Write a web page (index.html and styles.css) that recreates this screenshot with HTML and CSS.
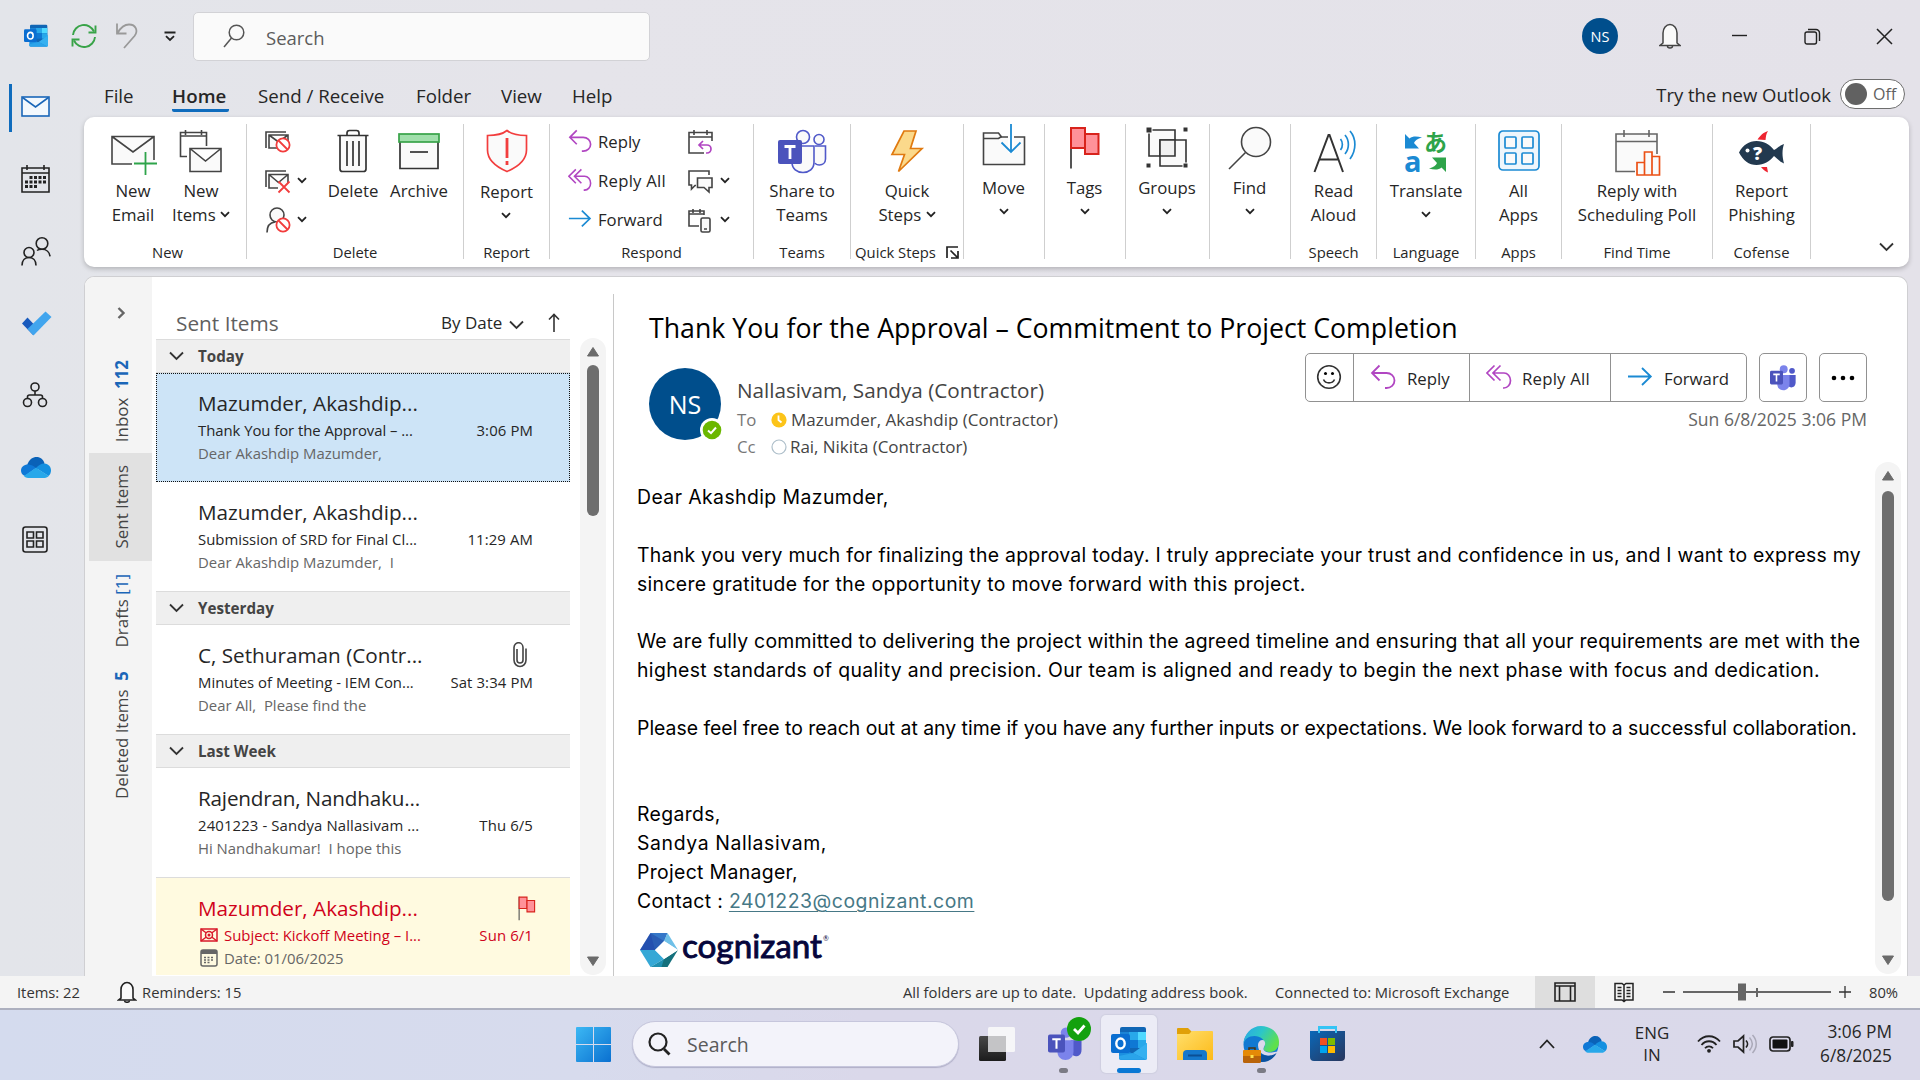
FILE: index.html
```html
<!DOCTYPE html>
<html lang="en">
<head>
<meta charset="utf-8">
<title>Sent Items - Outlook</title>
<link rel="stylesheet" href="styles.css">
</head>
<body>
<svg class="defs" width="0" height="0" aria-hidden="true">
  <symbol id="chev" viewBox="0 0 10 7"><path d="M1 1.200l4 4 4-4" fill="none" stroke="#222" stroke-width="1.800"/></symbol>
  <symbol id="chev-lg" viewBox="0 0 15 10"><path d="M1 1.500l6.500 6.500 6.500-6.500" fill="none" stroke="#333" stroke-width="1.800"/></symbol>
  <symbol id="reply" viewBox="0 0 26 26"><g fill="none" stroke="#b146c2" stroke-width="1.800"><path d="M9.500 1.500L2 9l7.500 7.500M2 9h14.500a8 7.500 0 0 1 0 15H15"/></g></symbol>
  <symbol id="replyall" viewBox="0 0 26 26"><g fill="none" stroke="#b146c2" stroke-width="1.700"><path d="M8.500 1.500L1 9l7.500 7.500M14.500 1.500L7 9l7.500 7.500M7 9h11a6.500 7.500 0 0 1 0 15h-1"/></g></symbol>
  <symbol id="forward" viewBox="0 0 26 26"><path d="M1 12.500h23M15 4l8.800 8.500L15 21" fill="none" stroke="#1b8ad3" stroke-width="1.800"/></symbol>
  <symbol id="flag" viewBox="0 0 32 44"><path d="M2 1.500v41" stroke="#555" stroke-width="2"/><path d="M2 2h14v20H2z" fill="#ff9199" stroke="#d8231c" stroke-width="2"/><path d="M16 8h13.500v20H16z" fill="#ff9199" stroke="#d8231c" stroke-width="2"/></symbol>
  <symbol id="banned" viewBox="0 0 16 16"><circle cx="8" cy="8" r="6.600" fill="#fff" stroke="#f23d3d" stroke-width="1.800"/><path d="M3.500 3.500l9 9" stroke="#f23d3d" stroke-width="1.800"/></symbol>
  <symbol id="cloud" viewBox="0 0 30 21"><path d="M6 8.500C8 2 12 0 15.500 0c4 0 7 2.500 8 6.500L16 12z" fill="#0a62b8"/><path d="M7 7.500c2 0 5 .8 8 3.500L4 19c-3-1-4-3.500-4-5.500 0-3.500 3-6 7-6z" fill="#0f78d6"/><path d="M15 11c3-3 5.500-4.700 8.500-4.500 4 .3 6.500 3.500 6.500 7 0 2-1 4.500-2.500 5.500z" fill="#1490e0"/><path d="M15 10.800l12.700 8.100c-.8.900-2.200 2-4.200 2H7c-1.500 0-3-.6-4.200-1.900z" fill="#28a8ea"/></symbol>
  <symbol id="outlook" viewBox="0 0 36 36"><rect x="9" y="1" width="26" height="27" rx="2" fill="#1066b5"/><rect x="9" y="6" width="9" height="8" fill="#1b83d5"/><rect x="18" y="6" width="9" height="8" fill="#28a8ea"/><rect x="27" y="6" width="8" height="8" fill="#50d9ff"/><rect x="18" y="14" width="9" height="8" fill="#0f78d4"/><rect x="27" y="14" width="8" height="8" fill="#28a8ea"/><path d="M36 17v15a2 2 0 0 1-2 2H10a2 2 0 0 1-2-2V20l14 8z" fill="#1b8fe0"/><path d="M22 27l14-10v15a2 2 0 0 1-1 1.700z" fill="#35b0f0"/><path d="M8 30l14-3 13 6.800H10a2 2 0 0 1-2-2z" fill="#2aa4ea"/><rect x="0" y="8" width="19" height="19" rx="2" fill="#0a6ed1"/><ellipse cx="9.500" cy="17.500" rx="4.200" ry="5" fill="none" stroke="#fff" stroke-width="2.400"/></symbol>
  <symbol id="teams" viewBox="0 0 36 36"><circle cx="19" cy="6" r="5.500" fill="#7b83eb"/><circle cx="30.500" cy="8" r="4" fill="#5059c9"/><path d="M24 14h11.500v10c0 5-3 7-6 7s-5.500-2-5.500-6z" fill="#5059c9"/><path d="M10 14h17v12c0 6-4 9-8.500 9S10 32 10 26z" fill="#7b83eb"/><rect x="0" y="8" width="18" height="19" rx="2" fill="#4b53bc"/><path d="M4.500 13h9M9 13v10" stroke="#fff" stroke-width="2.200"/></symbol>
</svg>

<div class="window">
  <header class="titlebar">
    <svg class="app-logo" width="24" height="24"><use href="#outlook"/></svg>
    <svg class="tb-refresh" width="26" height="26" viewBox="0 0 26 26"><g fill="none" stroke="#38a348" stroke-width="1.900"><path d="M2 12a11 11 0 0 1 21-3.500M24 14a11 11 0 0 1-21 3.500"/><path d="M24.500 2.500v7h-7M1.500 23.500v-7h7"/></g></svg>
    <svg class="tb-undo" width="24" height="26" viewBox="0 0 24 26"><path d="M2 .5v10h9.500M2.500 10C6 4 10 1.500 14 1.500c7 0 9.500 6.500 5.500 11.500L9 25" fill="none" stroke="#999" stroke-width="1.800"/></svg>
    <svg class="tb-more" width="12" height="11" viewBox="0 0 12 11"><path d="M.5 1.500h11" stroke="#222" stroke-width="2"/><path d="M2 5.200l4 3.800 4-3.800" fill="none" stroke="#222" stroke-width="1.800"/></svg>
    <div class="search">
      <svg width="22" height="24" viewBox="0 0 22 24"><circle cx="13.500" cy="8.500" r="7.300" fill="none" stroke="#555" stroke-width="1.500"/><path d="M8.500 14L1 23" stroke="#555" stroke-width="1.500"/></svg>
      <span>Search</span>
    </div>
    <div class="win-controls">
      <div class="me">NS</div>
      <svg class="bell" width="22" height="26" viewBox="0 0 22 26"><path d="M4 20V10a7 8.500 0 0 1 14 0v10l3 2.500H1z" fill="#fafafa" stroke="#444" stroke-width="1.500"/><path d="M8.500 23a2.500 2 0 0 0 5 0" fill="none" stroke="#444" stroke-width="1.500"/></svg>
      <svg class="min" width="16" height="16" viewBox="0 0 16 16"><path d="M0 7.500h15" stroke="#222" stroke-width="1.400"/></svg>
      <svg class="max" width="17" height="17" viewBox="0 0 17 17"><g fill="none" stroke="#222" stroke-width="1.400"><rect x="1" y="4" width="11.500" height="12" rx="2"/><path d="M4 1.500h8a3.500 3.500 0 0 1 3.500 3.500v8"/></g></svg>
      <svg class="close" width="17" height="17" viewBox="0 0 17 17"><path d="M1 1l15 15M16 1L1 16" stroke="#222" stroke-width="1.500"/></svg>
    </div>
  </header>

  <nav class="rail">
    <div class="rail-item active"><svg width="30" height="22" viewBox="0 0 30 22"><rect x="1" y="1" width="27" height="19" fill="#f3f8fd" stroke="#1a66b8" stroke-width="1.600"/><path d="M1.500 1.500l13 9.500 13-9.500" fill="none" stroke="#1a66b8" stroke-width="1.600"/></svg></div>
    <div class="rail-item"><svg width="30" height="28" viewBox="0 0 30 28"><path d="M1 3h27v24H1zM1 8h27M6 0v5M23 0v5" fill="none" stroke="#222" stroke-width="1.600"/><g fill="#222"><path d="M8.500 11h3v3h-3zM13 11h3v3h-3zM17.500 11h3v3h-3zM22 11h3v3h-3zM4 15.500h3v3H4zM8.500 15.500h3v3h-3zM13 15.500h3v3h-3zM17.500 15.500h3v3h-3zM22 15.500h3v3h-3zM4 20h3v3H4zM8.500 20h3v3h-3zM13 20h3v3h-3z"/></g></svg></div>
    <div class="rail-item"><svg width="30" height="30" viewBox="0 0 30 30"><g fill="none" stroke="#222" stroke-width="1.600"><circle cx="21" cy="7.500" r="5.800"/><path d="M16 14.500c1-.8 3-1.200 5-1.200 4.500 0 7.500 3 8 7"/><circle cx="8" cy="16.500" r="5"/><path d="M1 29.500c0-5 3-8 7-8s7 3 7 8"/></g></svg></div>
    <div class="rail-item"><svg width="31" height="25" viewBox="0 0 31 25"><path d="M1 12.500l5.500-6 7 7.500-1.500 10z" fill="#185abd"/><path d="M6.500 18L24.500.5 30.500 6 12.500 24.500z" fill="#41a5ee"/></svg></div>
    <div class="rail-item"><svg width="26" height="26" viewBox="0 0 26 26"><g fill="none" stroke="#222" stroke-width="1.600"><circle cx="13" cy="5" r="4"/><circle cx="5.500" cy="20.500" r="4"/><circle cx="20.500" cy="20.500" r="4"/><path d="M13 9v4M5.500 16.500V15a2 2 0 0 1 2-2h11a2 2 0 0 1 2 2v1.500"/></g></svg></div>
    <div class="rail-item"><svg width="30" height="21"><use href="#cloud"/></svg></div>
    <div class="rail-item"><svg width="26" height="27" viewBox="0 0 26 27"><g fill="none" stroke="#222" stroke-width="1.600"><rect x="1" y="1" width="24" height="25" rx="2.500"/><path d="M5 6h6.500v6H5zM14.500 6H21v6h-6.500zM5 15h6.500v6H5zM14.500 15H21v6h-6.500z"/></g></svg></div>
  </nav>

  <main class="main">
    <div class="tabs">
      <span class="t-file">File</span><span class="t-home">Home</span><span class="t-send">Send / Receive</span><span class="t-folder">Folder</span><span class="t-view">View</span><span class="t-help">Help</span>
      <div class="try"><span>Try the new Outlook</span><div class="toggle"><i></i>Off</div></div>
    </div>

    <div class="ribbon">
      <section class="group g-new"><div class="tools">
        <div class="big w68"><svg width="48" height="55" viewBox="0 0 48 55"><path d="M3 12.500h42v27.500H3z" fill="#fafafa"/><path d="M45 36V12.500H3V40h20M3 12.500L24 28l21-15.500" fill="none" stroke="#444" stroke-width="1.600"/><path d="M36.500 28v23M25 39.500h23" stroke="#2ea44a" stroke-width="1.800"/></svg><span>New<br>Email</span></div>
        <div class="big w68"><svg width="48" height="55" viewBox="0 0 48 55"><path d="M10 32.500H3.500V8.500h26V22M3.500 12h26M8.500 6v5M24.500 6v5" fill="none" stroke="#444" stroke-width="1.600"/><path d="M13 24.500h31v23H13zM13 24.500L28.500 37 44 24.500" fill="#fafafa" stroke="#444" stroke-width="1.600"/></svg><span>New<br>Items <svg class="c" width="10" height="7"><use href="#chev"/></svg></span></div>
      </div><h6>New</h6></section>

      <section class="group g-delete"><div class="tools">
        <div class="minis">
          <div><svg width="26" height="26" viewBox="0 0 26 26"><path d="M1 19V3h20M1 6v9" fill="none" stroke="#444" stroke-width="1.600"/><path d="M4 6h19v13H4zM4 6l9.500 7L23 6" fill="#fafafa" stroke="#444" stroke-width="1.600"/><use href="#banned" x="10" y="8" width="16" height="16"/></svg></div>
          <div><svg width="26" height="26" viewBox="0 0 26 26"><path d="M1 19V3h20" fill="none" stroke="#444" stroke-width="1.600"/><path d="M13 20H4V6.500h19V15M4 6.500l9.500 8L23 6.500" fill="#fafafa" stroke="#444" stroke-width="1.600"/><path d="M13.500 13.500l11 11M24.500 13.500l-11 11" stroke="#f23d3d" stroke-width="1.800"/></svg><svg class="c" width="10" height="7"><use href="#chev"/></svg></div>
          <div><svg width="26" height="26" viewBox="0 0 26 26"><circle cx="12" cy="8" r="7" fill="#fafafa" stroke="#444" stroke-width="1.600"/><path d="M2 25.500c0-6 3-10 8-10.500" fill="none" stroke="#444" stroke-width="1.600"/><use href="#banned" x="10" y="10" width="16" height="16"/></svg><svg class="c" width="10" height="7"><use href="#chev"/></svg></div>
        </div>
        <div class="big w68"><svg width="48" height="55" viewBox="0 0 48 55"><path d="M11 12v33a2.500 2.500 0 0 0 2.500 2.500h21A2.500 2.500 0 0 0 37 45V12" fill="#fafafa" stroke="#333" stroke-width="1.700"/><path d="M8.500 11.500h31M18 11V9a2.500 2.500 0 0 1 2.500-2.500h7A2.500 2.500 0 0 1 30 9v2M18 17v25M24 17v25M30 17v25" fill="none" stroke="#333" stroke-width="1.700"/></svg><span>Delete</span></div>
        <div class="big w64"><svg width="48" height="55" viewBox="0 0 48 55"><path d="M5 17v27.500h38V17" fill="#fafafa" stroke="#333" stroke-width="1.700"/><rect x="4" y="10" width="40" height="8" fill="#a0dfab" stroke="#38a348" stroke-width="1.700"/><path d="M15 28h18" stroke="#333" stroke-width="1.700"/></svg><span>Archive</span></div>
      </div><h6>Delete</h6></section>

      <section class="group g-report"><div class="tools">
        <div class="big w86 report"><svg width="48" height="56" viewBox="0 0 48 56"><path d="M24 6.500c3 2.500 10 5 19.500 5V26c0 11-9 17-19.500 21.500C13.500 43 4.500 37 4.500 26V11.500c9.500 0 16.500-2.500 19.500-5z" fill="#fafafa" stroke="#f23d3d" stroke-width="1.700"/><path d="M24 14v20M24 37v4" stroke="#f23d3d" stroke-width="2.800"/></svg><span>Report<br><svg class="c" width="10" height="7"><use href="#chev"/></svg></span></div>
      </div><h6>Report</h6></section>

      <section class="group g-respond"><div class="tools">
        <div class="replies">
          <div><svg width="24" height="24"><use href="#reply"/></svg>Reply</div>
          <div class="all"><svg width="24" height="24"><use href="#replyall"/></svg>Reply All</div>
          <div><svg width="24" height="24"><use href="#forward"/></svg>Forward</div>
        </div>
        <div class="minis">
          <div><svg width="26" height="26" viewBox="0 0 26 26"><path d="M16 24H1V3.500h23V12M1 8h23M6 1v5M19 1v5" fill="none" stroke="#444" stroke-width="1.600"/><path d="M15 12l-4 4 4 4M11 16h8a4 4 0 0 1 0 8h-1" fill="none" stroke="#b146c2" stroke-width="1.700"/></svg></div>
          <div><svg width="26" height="26" viewBox="0 0 26 26"><path d="M8 17.500H7L3.500 21v-4H1V3h20v4" fill="none" stroke="#444" stroke-width="1.600"/><path d="M9.500 10H24v9.500h-3V24l-5-4.500H9.500z" fill="#fafafa" stroke="#444" stroke-width="1.600"/></svg><svg class="c" width="10" height="7"><use href="#chev"/></svg></div>
          <div><svg width="26" height="26" viewBox="0 0 26 26"><path d="M11 19H1V4h15v4M1 7h15M5 2v4M12 2v4" fill="none" stroke="#444" stroke-width="1.600"/><rect x="13" y="11" width="9" height="14" rx="1.500" fill="#fafafa" stroke="#444" stroke-width="1.600"/><path d="M16 22h3" stroke="#444" stroke-width="1.500"/></svg><svg class="c" width="10" height="7"><use href="#chev"/></svg></div>
        </div>
      </div><h6>Respond</h6></section>

      <section class="group g-teams"><div class="tools">
        <div class="big w96"><svg width="50" height="55" viewBox="0 0 50 55"><g fill="#fafafa" stroke="#5059c9" stroke-width="1.600"><circle cx="26" cy="13" r="6.500"/><circle cx="42" cy="15.500" r="5"/><path d="M38 22h10.500v13c0 4-3 6-6 6-2 0-4-1-4.500-2"/><path d="M15 22h22v16c0 7-5 10.500-11 10.500S15 45 15 38z"/></g><rect x="1" y="16" width="24" height="24" rx="2" fill="#4b53bc"/><path d="M7.500 22.500h11M13 22.500V35" stroke="#fff" stroke-width="2.800"/></svg><span>Share to<br>Teams</span></div>
      </div><h6>Teams</h6></section>

      <section class="group g-quick"><div class="tools">
        <div class="big w112"><svg width="48" height="55" viewBox="0 0 48 55"><path d="M21 7h12L27.500 24.500H39L15.500 47.500l6-17H9z" fill="#fbd98b" stroke="#e07a10" stroke-width="1.700"/></svg><span>Quick<br>Steps <svg class="c" width="10" height="7"><use href="#chev"/></svg></span></div>
      </div><h6>Quick Steps <svg class="launch" width="13" height="13" viewBox="0 0 13 13"><path d="M1 12V1h11M4.500 4.500l7 7M12 5v7H5" fill="none" stroke="#222" stroke-width="1.700"/></svg></h6></section>

      <section class="group g-81"><div class="tools"><div class="big w80 short"><svg width="48" height="52" viewBox="0 0 48 52"><path d="M3.500 40.500V9h15l3 4h23v27.500z" fill="#fafafa" stroke="#444" stroke-width="1.600"/><path d="M3.500 14.500h15l3-2" fill="none" stroke="#444" stroke-width="1.600"/><path d="M31 0v29" stroke="#fff" stroke-width="6"/><path d="M31 0v28M21.500 18.500L31 28l9.500-9.500" fill="none" stroke="#1b8ad3" stroke-width="1.800"/></svg><span>Move<br><svg class="c" width="10" height="7"><use href="#chev"/></svg></span></div></div></section>
      <section class="group g-81"><div class="tools"><div class="big w80 short"><svg width="48" height="52" viewBox="0 0 48 52"><use href="#flag" x="8" y="2" width="32" height="44"/></svg><span>Tags<br><svg class="c" width="10" height="7"><use href="#chev"/></svg></span></div></div></section>
      <section class="group g-84"><div class="tools"><div class="big w82 short"><svg width="48" height="52" viewBox="0 0 48 52"><path d="M6 6h26v26H6z" fill="#fafafa" stroke="#333" stroke-width="1.600"/><path d="M17 16h26v26H17z" fill="#fafafa" stroke="#333" stroke-width="1.600"/><path d="M17 16h15v16H17z" fill="#f0f0f0" stroke="#333" stroke-width="1.600"/><path d="M3 3h6v6H3zM40 3h5v5h-5zM3 39h5v5H3zM40 39h5v5h-5z" fill="#333" stroke="#fff" stroke-width="1"/></svg><span>Groups<br><svg class="c" width="10" height="7"><use href="#chev"/></svg></span></div></div></section>
      <section class="group g-81"><div class="tools"><div class="big w80 short"><svg width="48" height="52" viewBox="0 0 48 52"><circle cx="30" cy="18" r="14.500" fill="#fafafa" stroke="#444" stroke-width="1.600"/><path d="M19.500 28.500L3 45" stroke="#444" stroke-width="1.600"/></svg><span>Find<br><svg class="c" width="10" height="7"><use href="#chev"/></svg></span></div></div></section>

      <section class="group g-speech"><div class="tools"><div class="big w84"><svg width="48" height="55" viewBox="0 0 48 55"><path d="M4.500 48L18.500 11h1L33 48M9 35.500h20" fill="none" stroke="#333" stroke-width="2"/><path d="M30.500 15c2.500 3 2.500 8 0 11M35 11c4.500 5.500 4.500 13.500 0 19M40 7c6.500 7.500 6.500 19 0 28" fill="none" stroke="#1b8ad3" stroke-width="1.700"/></svg><span>Read<br>Aloud</span></div></div><h6>Speech</h6></section>
      <section class="group g-lang"><div class="tools"><div class="big w98"><svg width="48" height="55" viewBox="0 0 48 55"><path d="M3 10l4.500 4.500c3-2.500 7-2.500 12.500-1-4.500 1-7 3-8 5.500l5 5.500H3z" fill="#1b8ad3"/><path d="M44 48l-4.500-4.500c-3 2.500-7 2.500-12.500 1 4.500-1 7-3 8-5.500l-5-5.500h14z" fill="#2ea44a"/><text x="2" y="48" class="tr-a">a</text><text x="22" y="27" class="tr-jp">あ</text></svg><span>Translate<br><svg class="c" width="10" height="7"><use href="#chev"/></svg></span></div></div><h6>Language</h6></section>
      <section class="group g-apps"><div class="tools"><div class="big w86"><svg width="48" height="55" viewBox="0 0 48 55"><g fill="#fafafa" stroke="#1b8ad3" stroke-width="1.700"><rect x="4" y="7" width="40" height="39" rx="4" fill="#eef6fc"/><rect x="10" y="13" width="11" height="11" rx="1"/><rect x="27" y="13" width="11" height="11" rx="1"/><rect x="10" y="29" width="11" height="11" rx="1"/><rect x="27" y="29" width="11" height="11" rx="1"/></g></svg><span>All<br>Apps</span></div></div><h6>Apps</h6></section>
      <section class="group g-find"><div class="tools"><div class="big w150"><svg width="48" height="55" viewBox="0 0 48 55"><path d="M22 47.500H3V10h41v20" fill="#fafafa" stroke="#666" stroke-width="1.600"/><path d="M3 17.500h41M11 6v7M36 6v7" stroke="#666" stroke-width="1.600"/><path d="M24 38.500h7.500V51H24zM31.500 28H39v23h-7.500zM39 32.500h7.500V51H39z" fill="#fafafa" stroke="#eb5015" stroke-width="1.700"/></svg><span>Reply with<br>Scheduling Poll</span></div></div><h6>Find Time</h6></section>
      <section class="group g-cof"><div class="tools"><div class="big w97"><svg width="48" height="55" viewBox="0 0 48 55"><path d="M19.500 15.500c3-4 5.500-7 10.500-8.500-2 3-2 5.500-2.500 9zM23 43h6l1 5.500c-3-1-5-3-7-5.500z" fill="#ee2430"/><path d="M1 28.500C5 21 11 17 18.500 17c8 0 13 3.500 17.500 9 3-1.500 5.500-4.500 10-6-2 6-2 12 0 19.500-5-2-7-5.500-10-7.500-4.500 5.500-10 9-17.500 9C11 41 5 36.500 1 28.500z" fill="#22394f"/><circle cx="9.500" cy="26.500" r="2" fill="#fff"/><text x="15" y="35.500" class="qm">?</text></svg><span>Report<br>Phishing</span></div></div><h6>Cofense</h6></section>
      <svg class="collapse" width="15" height="10"><use href="#chev-lg"/></svg>
    </div>

    <div class="panel">
      <aside class="strip">
        <div class="exp"><svg width="9" height="12" viewBox="0 0 9 12"><path d="M1.500 1l5 5-5 5" fill="none" stroke="#666" stroke-width="2.400"/></svg></div>
        <div class="fold inbox"><span>Inbox&nbsp; <b>112</b></span></div>
        <div class="fold sent"><span>Sent Items</span></div>
        <div class="fold drafts"><span>Drafts <em>[1]</em></span></div>
        <div class="fold deleted"><span>Deleted Items&nbsp; <b>5</b></span></div>
      </aside>

      <div class="list">
        <div class="list-head"><span class="title">Sent Items</span><span class="sort">By Date</span><svg class="sortchev" width="15" height="10"><use href="#chev-lg"/></svg><svg width="12" height="20" viewBox="0 0 12 20"><path d="M6 19V2M1 6.500l5-5 5 5" fill="none" stroke="#333" stroke-width="1.600"/></svg></div>
        <div class="day today"><svg width="15" height="10"><use href="#chev-lg"/></svg>Today</div>
        <div class="msg sel"><div class="from">Mazumder, Akashdip...</div><div class="subj"><span class="w215">Thank You for the Approval – ...</span><time>3:06 PM</time></div><div class="prev">Dear Akashdip Mazumder,</div></div>
        <div class="msg"><div class="from">Mazumder, Akashdip...</div><div class="subj"><span>Submission of SRD for Final Cl...</span><time>11:29 AM</time></div><div class="prev">Dear Akashdip Mazumder,&nbsp; I</div></div>
        <div class="day"><svg width="15" height="10"><use href="#chev-lg"/></svg>Yesterday</div>
        <div class="msg"><div class="from">C, Sethuraman (Contr...<svg class="clip" width="16" height="26" viewBox="0 0 16 26"><path d="M5 7v11a3 3 0 0 0 6 0V6M11 6a4.500 5 0 0 0-9-.5V18a6 6.500 0 0 0 12 0V6.500" fill="none" stroke="#444" stroke-width="1.600"/></svg></div><div class="subj"><span>Minutes of Meeting - IEM Con...</span><time>Sat 3:34 PM</time></div><div class="prev">Dear All,&nbsp; Please find the</div></div>
        <div class="day"><svg width="15" height="10"><use href="#chev-lg"/></svg>Last Week</div>
        <div class="msg"><div class="from raj">Rajendran, Nandhaku...</div><div class="subj"><span class="wide">2401223 - Sandya Nallasivam ...</span><time>Thu 6/5</time></div><div class="prev">Hi Nandhakumar!&nbsp; I hope this</div></div>
        <div class="msg flagged"><div class="from">Mazumder, Akashdip...<svg class="flag" width="18" height="25" viewBox="0 0 32 44" preserveAspectRatio="none"><use href="#flag"/></svg></div><div class="subj"><svg width="18" height="14" viewBox="0 0 18 14"><g fill="none" stroke="#d9192a" stroke-width="1.500"><rect x="1" y="1" width="16" height="12"/><path d="M1 1l16 12M17 1L1 13"/><circle cx="9" cy="7" r="3.500" fill="#fffadf"/></g><circle cx="9" cy="7" r="1.500" fill="#d9192a"/></svg><span>Subject: Kickoff Meeting – I...</span><time>Sun 6/1</time></div><div class="prev"><svg width="18" height="18" viewBox="0 0 18 18"><rect x="1" y="1" width="16" height="16" rx="2" fill="none" stroke="#666" stroke-width="1.500"/><path d="M1 1h16v4H1z" fill="#666"/><path d="M4 8.500h10M4 11h10M4 13.500h7" stroke="#666" stroke-width="1.500" stroke-dasharray="2 1.500"/></svg>Date: 01/06/2025</div></div>
      </div>
      <div class="scroll left"><svg width="14" height="11" viewBox="0 0 14 11"><path d="M7 1.500L12.500 10h-11z" fill="#6b6b6b" stroke="#6b6b6b" stroke-linejoin="round"/></svg><i></i><svg class="down" width="14" height="11" viewBox="0 0 14 11"><path d="M7 9.500L1.500 1h11z" fill="#6b6b6b" stroke="#6b6b6b" stroke-linejoin="round"/></svg></div>

      <article class="reader">
        <div class="subject">Thank You for the Approval – Commitment to Project Completion</div>
        <div class="meta">
          <div class="avatar">NS<svg width="24" height="24" viewBox="0 0 24 24"><circle cx="12" cy="12" r="12" fill="#fff"/><circle cx="12" cy="12" r="9.300" fill="#6bb700"/><path d="M8 12.500l3 2.700 5-5.700" fill="none" stroke="#fff" stroke-width="2"/></svg></div>
          <div class="people">
            <div class="name">Nallasivam, Sandya (Contractor)</div>
            <div class="to"><label>To</label><svg width="16" height="16" viewBox="0 0 16 16"><circle cx="8" cy="8" r="7.600" fill="#fcc419"/><path d="M7.500 3.500V8l3 2.500" fill="none" stroke="#fff" stroke-width="1.800"/></svg><span>Mazumder, Akashdip (Contractor)</span></div>
            <div class="to cc"><label>Cc</label><svg width="16" height="16" viewBox="0 0 16 16"><circle cx="8" cy="8" r="7" fill="#fff" stroke="#aebfca" stroke-width="1.200"/></svg><span>Rai, Nikita (Contractor)</span></div>
          </div>
          <div class="actions">
            <div class="btns">
              <div class="bar">
                <div class="b-emo"><svg width="26" height="26" viewBox="0 0 26 26"><g fill="none" stroke="#333" stroke-width="1.600"><circle cx="13" cy="13" r="11.300"/><path d="M7.500 15.500c2 4.500 9 4.500 11 0"/></g><circle cx="9.500" cy="9.500" r="1.500"/><circle cx="16.500" cy="9.500" r="1.500"/></svg></div>
                <div class="b-reply"><svg width="26" height="26"><use href="#reply"/></svg><span>Reply</span></div>
                <div class="b-all"><svg width="26" height="26"><use href="#replyall"/></svg><span>Reply All</span></div>
                <div class="b-fwd"><svg width="26" height="26"><use href="#forward"/></svg><span>Forward</span></div>
              </div>
              <div class="sq"><svg width="26" height="26"><use href="#teams"/></svg></div>
              <div class="sq"><svg width="24" height="6" viewBox="0 0 24 6"><circle cx="3" cy="3" r="2.300"/><circle cx="12" cy="3" r="2.300"/><circle cx="21" cy="3" r="2.300"/></svg></div>
            </div>
            <time>Sun 6/8/2025 3:06 PM</time>
          </div>
        </div>
        <div class="body-row">
          <div class="mail">
            <p class="s42">Dear Akashdip Mazumder,</p>
            <p>&nbsp;</p>
            <p class="s27">Thank you very much for finalizing the approval today. I truly appreciate your trust and confidence in us, and I want to express my</p>
            <p class="s34">sincere gratitude for the opportunity to move forward with this project.</p>
            <p>&nbsp;</p>
            <p class="s23">We are fully committed to delivering the project within the agreed timeline and ensuring that all your requirements are met with the</p>
            <p class="s37">highest standards of quality and precision. Our team is aligned and ready to begin the next phase with focus and dedication.</p>
            <p>&nbsp;</p>
            <p>Please feel free to reach out at any time if you have any further inputs or expectations. We look forward to a successful collaboration.</p>
            <p>&nbsp;</p>
            <p>&nbsp;</p>
            <p class="s34">Regards,</p>
            <p class="s62">Sandya Nallasivam,</p>
            <p class="s34">Project Manager,</p>
            <p class="s34">Contact : <a>2401223@cognizant.com</a></p>
            <svg class="logo" width="192" height="40" viewBox="0 0 192 40">
              <path d="M1 20L11.500 3 18 11 16 20z" fill="#2a5fc0"/><path d="M11.500 3h17L25 12l-9 8z" fill="#3577c8"/><path d="M28.500 3L39 20 25 11z" fill="#6fc0e8"/><path d="M1 20h15l9 9-13.500 8z" fill="#35a8d6"/><path d="M11.500 37l13.500-8 3.500 8z" fill="#1f8fb0"/><path d="M39 20L28.500 37h-6L25 29z" fill="#14707c"/><path d="M1 20L11.500 3 25 11l-9 9z" fill="#1c3f9c" opacity=".45"/><path d="M16 20l9-9 14 9-14 9z" fill="#fff"/>
              <text x="43" y="28" textLength="140" lengthAdjust="spacingAndGlyphs" class="brand">cognizant</text><text x="184" y="11" class="reg">®</text>
            </svg>
          </div>
          <div class="scroll right"><svg width="14" height="11" viewBox="0 0 14 11"><path d="M7 1.500L12.500 10h-11z" fill="#6b6b6b" stroke="#6b6b6b" stroke-linejoin="round"/></svg><i></i><svg class="down" width="14" height="11" viewBox="0 0 14 11"><path d="M7 9.500L1.500 1h11z" fill="#6b6b6b" stroke="#6b6b6b" stroke-linejoin="round"/></svg></div>
        </div>
      </article>
    </div>
  </main>
</div>

<footer class="status">
  <span class="st-items">Items: 22</span>
  <svg class="st-bell" width="20" height="22" viewBox="0 0 20 22"><path d="M4 17V8.500a6 7 0 0 1 12 0V17l2.500 2h-17z" fill="#fafafa" stroke="#222" stroke-width="1.600"/><path d="M7.500 19.500a2.500 1.800 0 0 0 5 0" fill="none" stroke="#222" stroke-width="1.500"/></svg>
  <span class="st-rem">Reminders: 15</span>
  <span class="st-all">All folders are up to date.&nbsp; Updating address book.</span>
  <span class="st-conn">Connected to: Microsoft Exchange</span>
  <div class="st-view"><svg width="22" height="20" viewBox="0 0 22 20"><path d="M1 1h20v18H1zM1 4h20M5.500 4v15M16.500 4v15" fill="none" stroke="#222" stroke-width="1.600"/></svg></div>
  <svg class="st-book" width="20" height="21" viewBox="0 0 20 21"><path d="M1 1.500h7l2 1.500 2-1.500h7V18h-7l-2 1.500L8 18H1zM10 3v17" fill="none" stroke="#222" stroke-width="1.500"/><path d="M3.500 5.500h4M3.500 8.500h4M3.500 11.500h4M3.500 14.500h4M12.500 5.500h4M12.500 8.500h4M12.500 11.500h4M12.500 14.500h4" stroke="#222" stroke-width="1.300"/></svg>
  <svg class="st-zoom" width="190" height="20" viewBox="0 0 190 20"><path d="M0 10h12M176 10h12M182 4v12" stroke="#333" stroke-width="1.300"/><path d="M20 10h148M94 6v9" stroke="#666" stroke-width="2"/><path d="M75 1.500h8v17h-8z" fill="#666"/></svg>
  <span class="st-pct">80%</span>
</footer>

<div class="taskbar">
  <svg class="start" width="35" height="35" viewBox="0 0 35 35"><defs><linearGradient id="wg" x1="0" y1="0" x2="1" y2="1"><stop offset="0" stop-color="#3cb8f4"/><stop offset="1" stop-color="#0a70d0"/></linearGradient></defs><path d="M1 0h16v17H0V1a1 1 0 0 1 1-1zM18 0h16a1 1 0 0 1 1 1v16H18zM0 18h17v17H1a1 1 0 0 1-1-1zM18 18h17v16a1 1 0 0 1-1 1H18z" fill="url(#wg)"/></svg>
  <div class="tsearch"><svg width="23" height="24" viewBox="0 0 23 24"><circle cx="10" cy="10" r="8.500" fill="none" stroke="#222" stroke-width="2.200"/><path d="M16 17l5.500 5.500" stroke="#222" stroke-width="2.800"/></svg><span>Search</span></div>
  <svg class="tview" width="36" height="35" viewBox="0 0 36 35"><defs><linearGradient id="dk" x1="0" y1="0" x2="0" y2="1"><stop offset="0" stop-color="#484848"/><stop offset="1" stop-color="#1c1c1c"/></linearGradient></defs><rect x="0" y="9" width="27" height="25" rx="1.500" fill="url(#dk)"/><rect x="9" y="0" width="27" height="25" rx="1.500" fill="#f6f6f8"/><rect x="9" y="9" width="18" height="16" fill="#c4c4c6"/></svg>
  <div class="tapp teams"><svg width="48" height="48" viewBox="0 0 48 48"><use href="#teams" x="1" y="10" width="34" height="34"/><circle cx="32" cy="12" r="12" fill="#13a10e"/><path d="M27 12l4 4 6.500-7.500" fill="none" stroke="#fff" stroke-width="2.800"/></svg><i></i></div>
  <div class="tapp on"><svg width="36" height="36"><use href="#outlook"/></svg><i></i></div>
  <div class="tapp folder"><svg width="36" height="34" viewBox="0 0 36 34"><defs><linearGradient id="fg" x1="0" y1="0" x2="1" y2="1"><stop offset="0" stop-color="#ffdf6c"/><stop offset="1" stop-color="#fdba18"/></linearGradient></defs><path d="M0 8V2a1 1 0 0 1 1-1h10l4 4v3z" fill="#e0a008"/><path d="M0 7h12l3-3h20a1 1 0 0 1 1 1v28H0z" fill="url(#fg)"/><path d="M6 33v-6a4 4 0 0 1 4-4h16a4 4 0 0 1 4 4v6z" fill="#1478cc"/><path d="M11 28.500h14" stroke="#0b4f94" stroke-width="2"/></svg></div>
  <div class="tapp edge"><svg width="36" height="37" viewBox="0 0 36 37"><defs><linearGradient id="eg" x1="0" y1="0" x2="1" y2=".5"><stop offset="0" stop-color="#2aa5ea"/><stop offset=".5" stop-color="#2cc6c8"/><stop offset="1" stop-color="#5fe04c"/></linearGradient></defs><circle cx="18" cy="18.500" r="17.500" fill="#1179d2"/><path d="M.5 18C1 8 8.500 0 18 0c11 0 18 8 18 16 0 6-4 10-9 10-4 0-6.500-1.500-6.500-3 0-1 1.500-2 1.500-5 0-4-4.500-8-10.500-8S1.500 13 .5 18z" fill="url(#eg)"/><path d="M15 19c0-3 2-5 4.500-5 2 0 3 2 2.500 4.500-.3 1.500-1.500 3-1.500 4.500 0 2 4 4 8 3.500l6-1-2 4c-6 2-17.500 0-17.500-10.500z" fill="#dbd9eb"/><path d="M33.500 27c-2 4.500-7 9-15 9-3-2-5-6-4-11 4 5 12 6.500 19 2z" fill="#0c529f"/><rect x="0" y="24" width="18" height="13" rx="1.500" fill="#b9640a"/><path d="M0 25.500a1.500 1.500 0 0 1 1.500-1.500h15a1.500 1.500 0 0 1 1.500 1.500V30H0z" fill="#e58a07"/><path d="M6 24v-2h6v2" fill="none" stroke="#4a3312" stroke-width="1.500"/><rect x="7.500" y="29" width="3" height="3" fill="#ffe14a"/></svg><i></i></div>
  <div class="tapp store"><svg width="35" height="36" viewBox="0 0 35 36"><defs><linearGradient id="sg" x1="0" y1="0" x2="1" y2="1"><stop offset="0" stop-color="#0b68b8"/><stop offset="1" stop-color="#28355c"/></linearGradient></defs><path d="M9 8V1h17v7" fill="none" stroke="#35c4f5" stroke-width="2"/><path d="M0 5h35v26a4 4 0 0 1-4 4H4a4 4 0 0 1-4-4z" fill="url(#sg)"/><path d="M9 7V2h17v5" fill="none" stroke="#35c4f5" stroke-width="2"/><path d="M10 12h7v7h-7z" fill="#f25022"/><path d="M18 12h7v7h-7z" fill="#7fba00"/><path d="M10 20h7v7h-7z" fill="#00a4ef"/><path d="M18 20h7v7h-7z" fill="#ffb900"/></svg></div>
  <div class="tray">
    <svg class="up" width="16" height="10" viewBox="0 0 16 10"><path d="M1 9l7-7.500L15 9" fill="none" stroke="#222" stroke-width="1.800"/></svg>
    <svg class="od" width="24" height="17"><use href="#cloud"/></svg>
    <div class="lang">ENG<br>IN</div>
    <svg class="wifi" width="24" height="18" viewBox="0 0 24 18"><g fill="none" stroke="#222" stroke-width="1.800"><path d="M1 6.500c6-7 16-7 22 0M4.500 10c4-5 11-5 15 0M8 13.200c2-2.500 6-2.500 8 0"/></g><circle cx="12" cy="15.800" r="1.900" fill="#222"/></svg>
    <svg class="vol" width="26" height="20" viewBox="0 0 26 20"><path d="M1 7v6h4l5.500 5V2L5 7z" fill="none" stroke="#222" stroke-width="1.700"/><path d="M13 6.500c2 2 2 5 0 7" fill="none" stroke="#222" stroke-width="1.700"/><path d="M16.500 3.500c3.500 4 3.500 9 0 13M19.500 1c5 5.500 5 12.500 0 18" fill="none" stroke="#aaa9b8" stroke-width="1.500"/></svg>
    <svg class="bat" width="25" height="16" viewBox="0 0 25 16"><rect x="1" y="1" width="20" height="14" rx="3" fill="none" stroke="#222" stroke-width="1.700"/><rect x="3.500" y="3.500" width="15" height="9" rx="1" fill="#111"/><path d="M22.500 5.500h1.500v5h-1.500z" fill="#222" stroke="#222"/></svg>
    <div class="clock">3:06 PM<br>6/8/2025</div>
  </div>
</div>
</body>
</html>
```
FILE: styles.css
```css
* { box-sizing: border-box; margin: 0; padding: 0; }
svg { display: block; flex: none; }
body { width: 1920px; height: 1080px; overflow: hidden; font-family: "Open Sans", "Noto Sans", sans-serif; color: #262626; white-space: nowrap; }
.defs { position: absolute; }

.window { height: 976px; display: grid; grid-template-columns: 84px 1fr; grid-template-rows: 72px 1fr; background: linear-gradient(90deg, #e3e5ea, #e5e4ea 30%, #e4e2e9); }

/* title bar */
.titlebar { grid-column: 1 / 3; display: flex; align-items: center; padding-left: 24px; }
.tb-refresh { margin-left: 23px; }
.tb-undo { margin-left: 18px; }
.tb-more { margin-left: 25px; }
.search { width: 457px; height: 49px; margin-left: 17px; border: 1px solid #d2d2d6; border-radius: 5px; background: #fafafa; display: flex; align-items: center; padding-left: 29px; gap: 21px; font-size: 18.5px; color: #5c5c5c; }
.search span { margin-top: 3px; }
.win-controls { margin-left: auto; display: flex; align-items: center; padding-right: 28px; }
.me { width: 36px; height: 36px; border-radius: 50%; background: #004e8c; color: #fff; font-size: 14.5px; display: grid; place-items: center; }
.bell { margin-left: 41px; }
.min { margin-left: 51px; }
.max { margin-left: 56px; }
.close { margin-left: 55px; }

/* navigation rail */
.rail { display: flex; flex-direction: column; margin-top: -1px; }
.rail-item { height: 72px; display: flex; align-items: center; padding-left: 21px; }
.rail-item.active { background: linear-gradient(#0f6cbd, #0f6cbd) 9px 13px / 3px 48px no-repeat; }
.rail-item:nth-child(5), .rail-item:nth-child(7) { padding-left: 22px; }

.main { display: flex; flex-direction: column; padding-right: 12px; }
.tabs { height: 45px; padding-left: 20px; display: flex; font-size: 18.7px; line-height: 45px; }
.tabs > span { margin-top: 1px; }
.t-file { width: 68px; }
.t-home { width: 57px; height: 39px; border-bottom: 3px solid #0f6cbd; font-weight: 650; letter-spacing: .1px; border-radius: 2px; }
.t-send { width: 158px; margin-left: 29px; }
.t-folder { width: 85px; }
.t-view { width: 71px; }
.try { margin-left: auto; padding-right: 4px; display: flex; align-items: center; gap: 9px; font-size: 18.5px; }
.toggle { width: 65px; height: 30px; margin-top: -2px; border: 1.5px solid #6e6e6e; border-radius: 15px; background: #fff; display: flex; align-items: center; gap: 6px; padding-left: 4px; font-size: 16px; line-height: 28px; color: #616161; }
.toggle i { width: 22px; height: 22px; border-radius: 50%; background: #616161; }

/* ribbon */
.ribbon { height: 150px; flex: none; display: flex; padding: 7px 0; border-radius: 10px; background: #fff; box-shadow: 0 2px 5px rgba(0,0,0,.22); }
.group { height: 135px; flex: none; border-right: 1px solid #cfcfcf; }
.tools { height: 118px; display: flex; }
.g-new { width: 163px; } .g-new .tools { padding-left: 15px; } .g-new h6 { padding-left: 5px; }
.g-delete { width: 217px; } .g-delete .tools { padding-left: 18px; }
.g-report { width: 86px; }
.g-respond { width: 204px; } .g-respond .tools { padding-left: 18px; }
.g-teams { width: 97px; }
.g-quick { width: 113px; }
.g-81 { width: 81px; }
.g-84 { width: 84px; }
.g-speech { width: 86px; }
.g-lang { width: 99px; }
.g-apps { width: 86px; }
.g-find { width: 151px; }
.g-cof { width: 98px; }
.group h6 { font-size: 14.8px; font-weight: 400; line-height: 20px; display: flex; justify-content: center; align-items: center; gap: 10px; }
.big { display: flex; flex-direction: column; align-items: center; font-size: 16.8px; line-height: 24px; text-align: center; }
.w64 { width: 64px; } .w68 { width: 68px; } .w80 { width: 79px; } .w82 { width: 82px; } .w84 { width: 85px; } .w86 { width: 86px; }
.w96 { width: 96px; } .w97 { width: 97px; } .w98 { width: 98px; } .w112 { width: 112px; } .w150 { width: 150px; }
.big .c { display: inline-block; vertical-align: 3px; }
.minis { width: 54px; margin-top: -2px; }
.minis > div { height: 39px; display: flex; align-items: center; gap: 6px; }
.replies { width: 120px; margin-top: -2px; font-size: 16.7px; }
.replies .all { letter-spacing: .25px; }
.replies > div { height: 39px; display: flex; align-items: center; gap: 6px; }
.replies svg { margin-bottom: 2px; }
.tr-a { font: 700 29px "Open Sans", sans-serif; fill: #1b8ad3; }
.tr-jp { font: 700 23px "Noto Sans CJK JP", sans-serif; fill: #2ea44a; }
.qm { font: 800 18px "Open Sans", sans-serif; fill: #fff; }
.collapse { margin: 118px 0 0 68px; }

/* mail panel */
.panel { height: 700px; margin: 9px 1px 0 0; display: flex; background: #fff; border: 1px solid #cfcfd2; border-width: 1px 1px 0; border-radius: 10px 10px 0 0; overflow: hidden; }
.strip { width: 67px; background: #f4f4f4; font-size: 16.9px; color: #444; }
.exp { height: 72px; display: flex; align-items: center; padding-left: 32px; }
.fold { margin-left: 4px; display: flex; align-items: center; justify-content: center; }
.fold span { writing-mode: vertical-rl; transform: rotate(180deg); line-height: 30px; margin-left: 2px; }
.inbox { height: 104px; } .sent { height: 108px; background: #e1e1e1; } .drafts { height: 99px; } .deleted { height: 151px; }
.fold b, .fold em { color: #1a66b8; font-style: normal; }

.list { width: 414px; margin-left: 4px; }
.list-head { height: 62px; display: flex; align-items: center; padding: 29px 9px 0 20px; line-height: 32px; }
.title { width: 265px; font-size: 20.8px; color: #5f5f5f; }
.sort { width: 68px; font-size: 17px; }
.sortchev { margin: 4px 24px 0 0; }
.day { height: 34px; padding-left: 13px; display: flex; align-items: center; gap: 14px; background: #efefef; border: 1px solid #dcdcdc; border-width: 1px 0; font-size: 15.2px; font-weight: 700; color: #444; }
.msg { height: 109px; padding: 15px 0 0 42px; font-size: 14.9px; }
.msg.sel { background: #cde4f7; border: 1px dotted #111; padding: 14px 0 0 41px; }
.from { height: 32px; line-height: 31px; font-size: 20.7px; display: flex; width: 340px; }
.from.raj { letter-spacing: -.2px; }
.from .clip { margin: 2px 10px 0 auto; }
.from .flag { margin: 3px 2px 0 auto; }
.subj, .prev { height: 24px; line-height: 20px; display: flex; align-items: center; }
.subj { width: 335px; margin-top: -3px; padding-top: 1px; }
.subj time { margin-left: auto; letter-spacing: .12px; }
.w215 { letter-spacing: -.05px; }
.wide { letter-spacing: .12px; }
.prev { color: #666; }
.flagged { background: #fffae0; border-top: 1px solid #dcdcdc; color: #d0021b; height: 98px; }
.flagged .subj, .flagged .prev { gap: 6px; padding-left: 2px; }

.scroll { width: 26px; border-radius: 13px; background: #f4f4f4; display: flex; flex-direction: column; align-items: center; padding: 8px 0; }
.scroll i { width: 12px; border-radius: 6px; background: #6e6e6e; }
.scroll .down { margin-top: auto; }
.scroll.left { height: 637px; margin: 61px 0 0 10px; }
.scroll.left i { height: 151px; margin-top: 8px; }
.scroll.right { flex: none; height: 512px; margin-left: auto; }
.scroll.right i { height: 410px; margin-top: 10px; }

/* reading pane */
.reader { width: 1294px; height: 682px; margin: 17px 0 0 7px; border-left: 1px solid #c8c8c8; display: flex; flex-direction: column; }
.subject { height: 59px; padding: 15px 0 0 35px; font-size: 26.7px; line-height: 38px; color: #000; }
.meta { height: 109px; display: flex; padding-left: 35px; }
.avatar { position: relative; flex: none; width: 72px; height: 72px; margin-top: 15px; border-radius: 50%; background: #004e8c; color: #fff; font-size: 25px; display: grid; place-items: center; }
.avatar svg { position: absolute; right: -3px; bottom: -2px; }
.people { margin: 21px 0 0 16px; color: #444; }
.name { height: 32px; line-height: 32px; font-size: 20.7px; }
.to { height: 27px; display: flex; align-items: center; font-size: 17px; line-height: 27px; }
.to label { width: 34px; font-size: 16.8px; color: #777; }
.to span { margin-left: 4px; }
.cc span { margin-left: 3px; letter-spacing: -.05px; }
.actions { margin-left: auto; padding-right: 40px; display: flex; flex-direction: column; align-items: flex-end; }
.btns { display: flex; gap: 12px; }
.bar { display: flex; border: 1.5px solid #919191; border-radius: 5px; height: 49px; width: 442px; font-size: 16.8px; }
.bar > div { display: flex; align-items: center; border-left: 1px solid #919191; padding-left: 16px; }
.bar > div svg { margin-bottom: 2px; }
.bar > div span { margin: 2px 0 0 11px; }
.bar > .b-emo { border: 0; width: 47px; padding-left: 10px; }
.b-reply { width: 116px; } .b-all { width: 141px; } .b-fwd { flex: 1; }
.bar > .b-all span { margin-left: 10px; letter-spacing: .2px; }
.sq { width: 48px; height: 49px; border: 1.5px solid #919191; border-radius: 5px; display: grid; place-items: center; }
.actions time { margin-top: 4px; font-size: 17.55px; line-height: 27px; color: #666; }
.body-row { display: flex; padding-right: 6px; }
.mail { padding: 21px 0 0 23px; font-family: Inter, sans-serif; font-size: 19.4px; line-height: 28.85px; color: #000; }
.s42 { letter-spacing: .42px; } .s27 { letter-spacing: .28px; } .s34 { letter-spacing: .34px; } .s23 { letter-spacing: .24px; } .s37 { letter-spacing: .37px; } .s62 { letter-spacing: .62px; }
.mail a { letter-spacing: .55px; color: #467886; text-decoration: underline; text-underline-offset: 3px; text-decoration-thickness: 1px; }
.logo { margin: 14px 0 0 2px; overflow: visible; }
.brand { font: 400 33px "Lato", sans-serif; fill: #06063c; stroke: #06063c; stroke-width: .9px; }
.reg { font: 7px "Lato", sans-serif; fill: #06063c; }

/* status bar */
.status { height: 34px; display: flex; align-items: center; background: #f4f4f4; border-bottom: 2px solid #adb0bf; font-size: 14.75px; color: #333; }
.st-items { margin-left: 17px; width: 100px; }
.st-rem { margin-left: 5px; width: 761px; letter-spacing: .06px; }
.st-all { width: 372px; }
.st-conn { width: 260px; }
.st-view { width: 60px; height: 32px; background: #dedede; display: grid; place-items: center; }
.st-book { margin-left: 19px; }
.st-zoom { margin-left: 29px; }
.st-pct { margin-left: 16px; }

/* taskbar */
.taskbar { height: 70px; padding-bottom: 2px; display: flex; align-items: center; background: linear-gradient(90deg, #d4dbee, #d7dbed 30%, #dad8ea 45%, #dad9ea); }
.start { margin-left: 576px; }
.tsearch { width: 327px; height: 46px; margin-left: 21px; border-radius: 23px; border: 1px solid #c6c6dc; background: #f3f3fa; display: flex; align-items: center; padding-left: 15px; gap: 16px; font-size: 19.5px; color: #5a5a5a; box-shadow: 0 1px 1px rgba(80,80,120,.3); }
.tview { margin-left: 20px; }
.tapp { position: relative; width: 56px; height: 58px; margin-left: 10px; display: grid; place-items: center; border-radius: 5px; }
.tapp i { position: absolute; left: 24px; bottom: 0; width: 9px; height: 5px; border-radius: 3px; background: #7b7b85; }
.tapp.teams { margin-left: 20px; }
.tapp.teams svg { margin: -6px 0 0 12px; }
.tapp.on { background: #ececf6; box-shadow: 0 0 1px 1px #cfcfe0; }
.tapp.on i { left: 16px; width: 24px; background: #0a78d4; }
.tray { margin-left: auto; display: flex; align-items: center; padding-right: 28px; font-size: 16.9px; line-height: 24px; }
.od { margin-left: 28px; }
.lang { width: 42px; margin-left: 24px; text-align: center; line-height: 22px; }
.wifi { margin-left: 24px; }
.vol { margin-left: 12px; }
.bat { margin-left: 10px; }
.clock { width: 98px; text-align: right; font-size: 17.3px; }
```
